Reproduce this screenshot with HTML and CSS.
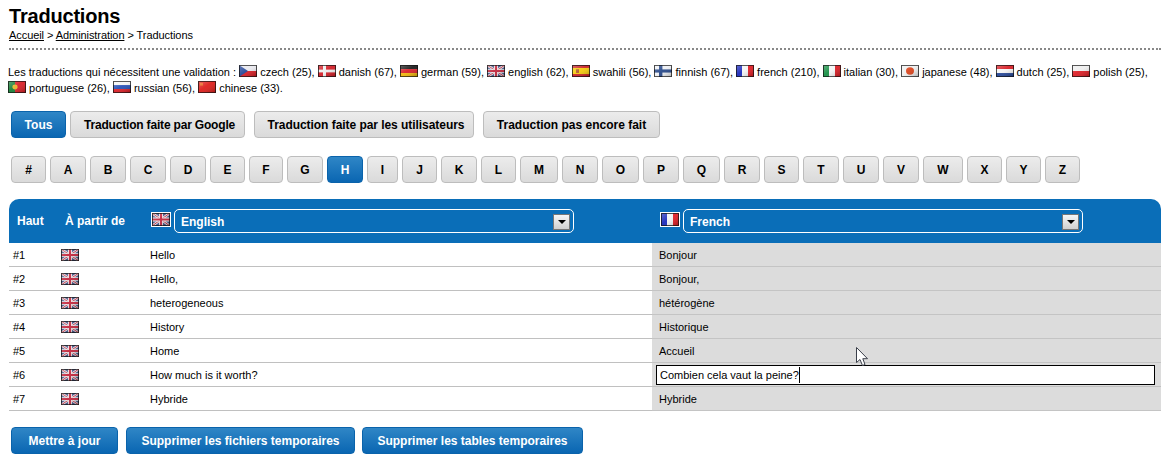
FILE: index.html
```html
<!DOCTYPE html>
<html lang="fr">
<head>
<meta charset="utf-8">
<title>Traductions</title>
<link rel="stylesheet" href="styles.css">
</head>
<body>
<svg class="defs" width="0" height="0" aria-hidden="true">
  <defs>
    <linearGradient id="gloss" x1="0" y1="0" x2="1" y2="1">
      <stop offset="0" stop-color="#fff" stop-opacity=".35"/>
      <stop offset=".45" stop-color="#fff" stop-opacity=".1"/>
      <stop offset="1" stop-color="#000" stop-opacity=".3"/>
    </linearGradient>
    <symbol id="f-cz" viewBox="0 0 18 13" preserveAspectRatio="none"><rect width="18" height="6.5" fill="#e8e8ee"/><rect y="6.5" width="18" height="6.5" fill="#d8141c"/><path d="M0 0L9 6.5L0 13z" fill="#1c3f94"/></symbol>
    <symbol id="f-dk" viewBox="0 0 18 13" preserveAspectRatio="none"><rect width="18" height="13" fill="#d2141e"/><rect x="5" width="3" height="13" fill="#eee"/><rect y="5" width="18" height="3" fill="#eee"/></symbol>
    <symbol id="f-de" viewBox="0 0 18 13" preserveAspectRatio="none"><rect width="18" height="4.4" fill="#111"/><rect y="4.4" width="18" height="4.3" fill="#d8141c"/><rect y="8.7" width="18" height="4.3" fill="#f0b400"/></symbol>
    <symbol id="f-gb" viewBox="0 0 18 13" preserveAspectRatio="none"><rect width="18" height="13" fill="#3a4a80"/><path d="M0 0L18 13M18 0L0 13" stroke="#e8e0e4" stroke-width="2.6"/><path d="M0 0L18 13M18 0L0 13" stroke="#b8283c" stroke-width="1"/><path d="M9 0V13M0 6.5H18" stroke="#eee" stroke-width="4"/><path d="M9 0V13M0 6.5H18" stroke="#c01c34" stroke-width="2.2"/></symbol>
    <symbol id="f-es" viewBox="0 0 18 13" preserveAspectRatio="none"><rect width="18" height="13" fill="#c8141c"/><rect y="3.2" width="18" height="6.6" fill="#f5c800"/><rect x="4" y="4.6" width="3" height="4" fill="#b05020"/></symbol>
    <symbol id="f-fi" viewBox="0 0 18 13" preserveAspectRatio="none"><rect width="18" height="13" fill="#eef0f4"/><rect x="5" width="3.4" height="13" fill="#1c3f84"/><rect y="4.8" width="18" height="3.4" fill="#1c3f84"/></symbol>
    <symbol id="f-fr" viewBox="0 0 18 13" preserveAspectRatio="none"><rect width="6" height="13" fill="#1020b8"/><rect x="6" width="6" height="13" fill="#f4f4f4"/><rect x="12" width="6" height="13" fill="#e0141c"/></symbol>
    <symbol id="f-it" viewBox="0 0 18 13" preserveAspectRatio="none"><rect width="6" height="13" fill="#0c8a3c"/><rect x="6" width="6" height="13" fill="#f4f4f4"/><rect x="12" width="6" height="13" fill="#d8141c"/></symbol>
    <symbol id="f-jp" viewBox="0 0 18 13" preserveAspectRatio="none"><rect width="18" height="13" fill="#eee"/><circle cx="9" cy="6.5" r="4" fill="#d83a10"/></symbol>
    <symbol id="f-nl" viewBox="0 0 18 13" preserveAspectRatio="none"><rect width="18" height="4.4" fill="#d8141c"/><rect y="4.4" width="18" height="4.3" fill="#f4f4f4"/><rect y="8.7" width="18" height="4.3" fill="#1c3f94"/></symbol>
    <symbol id="f-pl" viewBox="0 0 18 13" preserveAspectRatio="none"><rect width="18" height="6.5" fill="#eee"/><rect y="6.5" width="18" height="6.5" fill="#dc141c"/></symbol>
    <symbol id="f-pt" viewBox="0 0 18 13" preserveAspectRatio="none"><rect width="7" height="13" fill="#0c7a2c"/><rect x="7" width="11" height="13" fill="#d8141c"/><circle cx="7" cy="6.5" r="2.6" fill="#e8b020"/></symbol>
    <symbol id="f-ru" viewBox="0 0 18 13" preserveAspectRatio="none"><rect width="18" height="4.4" fill="#f4f4f4"/><rect y="4.4" width="18" height="4.3" fill="#1c48b4"/><rect y="8.7" width="18" height="4.3" fill="#dc141c"/></symbol>
    <symbol id="f-cn" viewBox="0 0 18 13" preserveAspectRatio="none"><rect width="18" height="13" fill="#dc1410"/><rect x="2" y="2" width="3" height="3" fill="#e85a10"/></symbol>
    <symbol id="f-gloss" viewBox="0 0 18 13" preserveAspectRatio="none"><rect width="18" height="13" fill="url(#gloss)"/><rect x=".5" y=".5" width="17" height="12" fill="none" stroke="#111" stroke-opacity=".75"/></symbol>
  </defs>
</svg>

<header class="page-head">
  <h1>Traductions</h1>
  <div class="crumbs"><a href="#">Accueil</a> &gt; <a href="#">Administration</a> &gt; Traductions</div>
</header>

<p class="pending">Les traductions qui nécessitent une validation :
  <span class="lang"><svg class="flag"><use href="#f-cz"/><use href="#f-gloss"/></svg> czech (25),</span>
  <span class="lang"><svg class="flag"><use href="#f-dk"/><use href="#f-gloss"/></svg> danish (67),</span>
  <span class="lang"><svg class="flag"><use href="#f-de"/><use href="#f-gloss"/></svg> german (59),</span>
  <span class="lang"><svg class="flag"><use href="#f-gb"/><use href="#f-gloss"/></svg> english (62),</span>
  <span class="lang"><svg class="flag"><use href="#f-es"/><use href="#f-gloss"/></svg> swahili (56),</span>
  <span class="lang"><svg class="flag"><use href="#f-fi"/><use href="#f-gloss"/></svg> finnish (67),</span>
  <span class="lang"><svg class="flag"><use href="#f-fr"/><use href="#f-gloss"/></svg> french (210),</span>
  <span class="lang"><svg class="flag"><use href="#f-it"/><use href="#f-gloss"/></svg> italian (30),</span>
  <span class="lang"><svg class="flag"><use href="#f-jp"/><use href="#f-gloss"/></svg> japanese (48),</span>
  <span class="lang"><svg class="flag"><use href="#f-nl"/><use href="#f-gloss"/></svg> dutch (25),</span>
  <span class="lang"><svg class="flag"><use href="#f-pl"/><use href="#f-gloss"/></svg> polish (25),</span>
  <span class="lang"><svg class="flag"><use href="#f-pt"/><use href="#f-gloss"/></svg> portuguese (26),</span>
  <span class="lang"><svg class="flag"><use href="#f-ru"/><use href="#f-gloss"/></svg> russian (56),</span>
  <span class="lang"><svg class="flag"><use href="#f-cn"/><use href="#f-gloss"/></svg> chinese (33).</span>
</p>

<nav class="tabs">
  <a class="btn active tab-all" href="#">Tous</a>
  <a class="btn tab-google" href="#">Traduction faite par Google</a>
  <a class="btn tab-users" href="#">Traduction faite par les utilisateurs</a>
  <a class="btn tab-todo" href="#">Traduction pas encore fait</a>
</nav>

<nav class="letters">
  <a class="btn" href="#">#</a><a class="btn" href="#">A</a><a class="btn" href="#">B</a><a class="btn" href="#">C</a><a class="btn" href="#">D</a><a class="btn" href="#">E</a><a class="btn" href="#">F</a><a class="btn" href="#">G</a><a class="btn active" href="#">H</a><a class="btn" href="#">I</a><a class="btn" href="#">J</a><a class="btn" href="#">K</a><a class="btn" href="#">L</a><a class="btn" href="#">M</a><a class="btn" href="#">N</a><a class="btn" href="#">O</a><a class="btn" href="#">P</a><a class="btn" href="#">Q</a><a class="btn" href="#">R</a><a class="btn" href="#">S</a><a class="btn" href="#">T</a><a class="btn" href="#">U</a><a class="btn" href="#">V</a><a class="btn" href="#">W</a><a class="btn" href="#">X</a><a class="btn" href="#">Y</a><a class="btn" href="#">Z</a>
</nav>

<table class="grid">
  <colgroup><col class="c-rank"><col class="c-from"><col class="c-src"><col class="c-dst"></colgroup>
  <thead>
    <tr>
      <th class="h-rank">Haut</th>
      <th class="h-from">À partir de</th>
      <th class="h-lang">
        <div class="picker"><svg class="flag boxed"><use href="#f-gb"/><use href="#f-gloss"/></svg><div class="select"><span>English</span><i class="arrow"></i></div></div>
      </th>
      <th class="h-lang">
        <div class="picker"><svg class="flag boxed"><use href="#f-fr"/><use href="#f-gloss"/></svg><div class="select"><span>French</span><i class="arrow"></i></div></div>
      </th>
    </tr>
  </thead>
  <tbody>
    <tr><td>#1</td><td class="f"><svg class="flag"><use href="#f-gb"/><use href="#f-gloss"/></svg></td><td class="src">Hello</td><td class="dst">Bonjour</td></tr>
    <tr><td>#2</td><td class="f"><svg class="flag"><use href="#f-gb"/><use href="#f-gloss"/></svg></td><td class="src">Hello,</td><td class="dst">Bonjour,</td></tr>
    <tr><td>#3</td><td class="f"><svg class="flag"><use href="#f-gb"/><use href="#f-gloss"/></svg></td><td class="src">heterogeneous</td><td class="dst">hétérogène</td></tr>
    <tr><td>#4</td><td class="f"><svg class="flag"><use href="#f-gb"/><use href="#f-gloss"/></svg></td><td class="src">History</td><td class="dst">Historique</td></tr>
    <tr><td>#5</td><td class="f"><svg class="flag"><use href="#f-gb"/><use href="#f-gloss"/></svg></td><td class="src">Home</td><td class="dst">Accueil</td></tr>
    <tr class="editing"><td>#6</td><td class="f"><svg class="flag"><use href="#f-gb"/><use href="#f-gloss"/></svg></td><td class="src">How much is it worth?</td><td class="edit"><div class="field"><span class="typed">Combien cela vaut la peine?</span></div></td></tr>
    <tr><td>#7</td><td class="f"><svg class="flag"><use href="#f-gb"/><use href="#f-gloss"/></svg></td><td class="src">Hybride</td><td class="dst">Hybride</td></tr>
  </tbody>
</table>

<div class="actions">
  <a class="btn active act-update" href="#">Mettre à jour</a>
  <a class="btn active act-files" href="#">Supprimer les fichiers temporaires</a>
  <a class="btn active act-tables" href="#">Supprimer les tables temporaires</a>
</div>

<svg class="pointer" width="13" height="20" viewBox="0 0 13 20" aria-hidden="true">
  <path d="M.5.5V15.5L4 12.5L6.5 18.5L9 17.5L6.8 11.7H11.5Z" fill="#fff" stroke="#3a3f4a" stroke-width="1"/>
</svg>
</body>
</html>
```
FILE: styles.css
```css
* { box-sizing: border-box; }
html, body { margin: 0; padding: 0; }
body {
  position: relative;
  height: 458px;
  overflow: hidden;
  background: #fff;
  color: #000;
  font: 11px/16px "Liberation Sans", Arial, sans-serif;
  padding: 0 6px 0 9px;
}
.defs { position: absolute; }
a { color: inherit; }

.page-head {
  padding-top: 5px;
  height: 50px;
  margin: 0 0 4px;
  border-bottom: 2px dotted #888;
  width: 1152px;
}
h1 { margin: 0; font-size: 20px; line-height: 23px; font-weight: bold; letter-spacing: -.2px; }
.crumbs { line-height: 13px; margin-top: 1px; letter-spacing: -.07px; }

.pending { margin: 14px 0 0 -1px; width: 1150px; line-height: 16px; height: 32px; }
.flag { width: 18px; height: 12px; vertical-align: -1px; display: inline-block; }
.flag use { width: 100%; height: 100%; }
.lang { white-space: nowrap; }

.btn {
  display: inline-flex;
  align-items: center;
  justify-content: center;
  height: 27px;
  padding: 1px 0 0;
  border: 1px solid #bdbdbd;
  border-radius: 4px;
  background: linear-gradient(#ececec, #dadada);
  color: #000;
  font-weight: bold;
  font-size: 12px;
  text-decoration: none;
  white-space: nowrap;
}
.btn.active {
  border-color: #0a63ab;
  background: linear-gradient(#2f86c6, #0a66b2);
  color: #fff;
}
.tabs { display: flex; margin: 15px 0 0 2px; }
.tab-all { width: 55px; }
.tab-google { width: 175px; margin-left: 4px; padding-left: 4px; letter-spacing: -.18px; }
.tab-users { width: 220px; margin-left: 9px; padding-left: 4px; letter-spacing: -.05px; }
.tab-todo { width: 177px; margin-left: 9px; }

.letters {
  display: grid;
  grid-template-columns: 35px 36px 36px 36px 36px 35px 34px 36px 36px 31px 35px 36px 35px 38px 36px 37px 36px 37px 36px 35px 36px 36px 36px 40px 35px 35px 35px;
  justify-content: start;
  gap: 4px;
  margin: 18px 0 0 2px;
}

.grid {
  margin-top: 16px;
  width: 1152px;
  border-collapse: separate;
  border-spacing: 0;
  table-layout: fixed;
}
.c-rank { width: 48px; }
.c-from { width: 89px; }
.c-src { width: 506px; }
.c-dst { width: 509px; }
thead th {
  height: 44px;
  background: #0a6eb8;
  color: #fff;
  font-size: 12px;
  font-weight: bold;
  text-align: left;
  padding: 0;
}
thead th:first-child { border-top-left-radius: 10px; }
thead th:last-child { border-top-right-radius: 10px; }
thead th.h-rank { padding-left: 8px; }
thead th.h-from { padding-left: 8px; }
.picker { display: flex; align-items: flex-start; gap: 3px; }
thead th.h-lang { padding-left: 5px; }
thead th.h-lang:last-child { padding-left: 8px; }
.flag.boxed { width: 20px; height: 15px; border: 1px solid #fff; margin-top: 3px; }
.select {
  width: 400px;
  height: 24px;
  border: 1px solid #fff;
  border-radius: 5px;
  display: flex;
  align-items: center;
  justify-content: space-between;
  padding: 1px 3px 0 6px;
}
.arrow {
  width: 17px;
  height: 16px;
  border: 1px solid #777;
  background: linear-gradient(#f6f6f6, #d0d0d0);
  display: flex;
  align-items: center;
  justify-content: center;
}
.arrow::after {
  content: "";
  border: 4px solid transparent;
  border-top: 4px solid #000;
  border-bottom: 0;
}
tbody td {
  height: 24px;
  padding: 1px 0 0 4px;
  border-bottom: 1px solid #c0c0c0;
  vertical-align: middle;
  line-height: 22px;
}
tbody td.dst { background: #dcdcdc; padding-left: 7px; border-bottom-color: #c4c4c4; }
tbody td.f { padding-left: 4px; }
tbody td.f .flag { display: block; }
tbody td.edit { background: #dcdcdc; padding: 0 6px 0 4px; }
.field {
  height: 20px;
  border: 1px solid #000;
  background: #fff;
  line-height: 18px;
  padding-left: 3px;
}
.typed { border-right: 1px solid #000; display: inline-block; height: 16px; line-height: 16px; vertical-align: top; margin-top: 1px; }

.actions { display: flex; margin: 16px 0 0 2px; }
.act-update { width: 107px; }
.act-files { width: 229px; margin-left: 8px; }
.act-tables { width: 221px; margin-left: 7px; }

.pointer { position: absolute; left: 856px; top: 347px; }
```
